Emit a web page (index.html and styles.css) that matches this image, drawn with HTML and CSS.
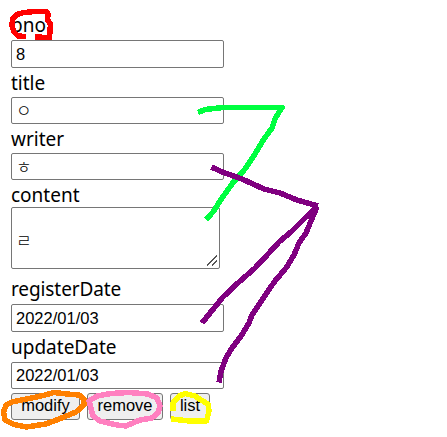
FILE: index.html
```
<!DOCTYPE html>
<html lang="ko">
<head>
<meta charset="utf-8">
<title>Board</title>
<link rel="stylesheet" href="styles.css">
</head>
<body>
<form class="board">
  <label class="label" for="bno">bno</label>
  <input class="field tall" id="bno" value="8">
  <label class="label low" for="title">title</label>
  <input class="field jamo" id="title" value="ㅇ">
  <label class="label low" for="writer">writer</label>
  <input class="field jamo" id="writer" value="ㅎ">
  <label class="label content-label" for="content">content</label>
  <textarea class="area" id="content">
ㄹ</textarea>
  <label class="label register-label" for="registerDate">registerDate</label>
  <input class="field tall" id="registerDate" value="2022/01/03">
  <label class="label update-label" for="updateDate">updateDate</label>
  <input class="field" id="updateDate" value="2022/01/03">
  <div class="actions">
    <button class="btn modify" type="button">modify</button>
    <button class="btn remove" type="button">remove</button>
    <button class="btn list" type="button">list</button>
  </div>
</form>
<svg class="marks" width="447" height="437" viewBox="0 0 447 437">
  <path stroke="#555" stroke-width="1" d="M207 265.500L217 255.500M212 265.500L217 260.500"/>
  <path stroke="#ff0000" stroke-width="5.500" d="M26 36.500L18 36L14 32L12 26L12.500 19L17 14.500L24 12.500L35 11.500L46 11.500L48 14L47.500 20L50.500 24L50 30L49.500 37.500L35 37"/>
  <path stroke="#00ff40" stroke-width="5.500" d="M198 112.500L205 109.500L223 107.500L282 107.500L279 112L275 119L272 128L264 139L255 154L245 169L232 184L222 198L213 212L206 219.500"/>
  <g stroke="#800080" stroke-width="5.500">
    <path d="M211.500 167L221 171.500L242 179L264 189L280 193L297 200L318 206"/>
    <path d="M318 206L304 219L291 232L279 242L269 253L255 268L239 282L223 297L210 313L202 323"/>
    <path d="M317 207L311 221L306 233L299 243L294 255L286 268L275 281L268 291L260 303L252 315L249 323L241 336L232 348L226 358L221 371L219 382.500"/>
  </g>
  <path stroke="#ff8000" stroke-width="5.500" d="M45 395L32 398L12 402L6 405L3.500 412L5 420L14 424.500L26 427L46 424L59 419L76 412L84 405L84 399L79 395L67 394L54 392.500L45 395Z"/>
  <path stroke="#ff80c0" stroke-width="5.500" d="M89 401L97 396L111 393.500L129 392.500L148 394L157 398L160 406L158 413L152 418L140 420L126 426L117 425L100 421L93 416L89 401Z"/>
  <path stroke="#ffff00" stroke-width="5.500" d="M173 411L173 403L179 396L185 393.500L195 396L201 400L208 404L209 411L206.500 421L190 421L171 419"/>
</svg>
</body>
</html>
```
FILE: styles.css
```
* { box-sizing: border-box; }
html, body { margin: 0; height: 437px; overflow: hidden; background: #fff; }
body { position: relative; }
.board {
  display: flex;
  flex-direction: column;
  align-items: flex-start;
  padding: 11px;
}
.label {
  display: block;
  height: 29px;
  line-height: 29px;
  font-family: "Noto Sans", "Noto Sans CJK KR", sans-serif;
  font-size: 19px;
  color: #000;
}
.low { line-height: 31px; }
.content-label { height: 27px; line-height: 31px; }
.register-label { height: 35px; padding-top: 6px; letter-spacing: -0.1px; }
.update-label { height: 30px; line-height: 31px; }
.field, .area {
  display: block;
  margin: 0;
  border: 1px solid #767676;
  border-radius: 2px;
  background: #fff;
  color: #000;
  font-family: "Liberation Sans", "Noto Sans CJK KR", sans-serif;
  font-size: 16.500px;
  outline: none;
}
.field { width: 213px; height: 27px; padding: 1px 4px; }
.tall { height: 28px; }
.field.jamo {
  padding: 0 4px 2px;
  font-family: "Noto Sans CJK KR", sans-serif;
  font-weight: 300;
  font-size: 17px;
}
.area {
  width: 209px;
  height: 62px;
  padding: 20px 4px 0;
  line-height: 24px;
  font-family: "Noto Sans CJK KR", sans-serif;
  font-weight: 300;
  font-size: 17px;
  resize: none;
  overflow: hidden;
}
.actions { display: flex; gap: 7px; margin-top: 4px; }
.btn {
  height: 27px;
  margin: 0;
  padding: 0 0 2px;
  border: 1px solid #767676;
  border-radius: 3px;
  background: #efefef;
  color: #000;
  font-family: "Liberation Sans", sans-serif;
  font-size: 16.500px;
}
.modify { width: 69px; }
.remove { width: 76px; }
.list { width: 40px; }
.marks {
  position: absolute;
  left: 0;
  top: 0;
  fill: none;
  pointer-events: none;
  stroke-linejoin: round;
  shape-rendering: crispEdges;
}
```
